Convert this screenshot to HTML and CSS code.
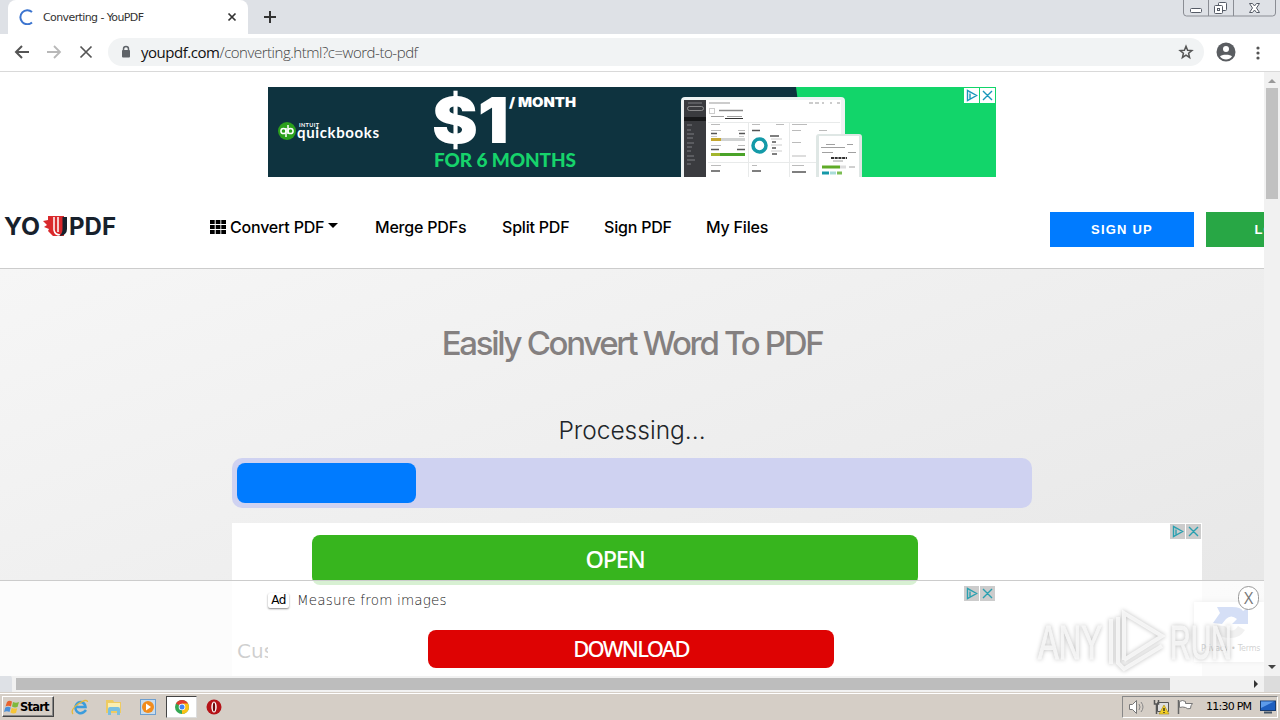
FILE: index.html
```
<!DOCTYPE html>
<html lang="en">
<head>
	<meta charset="UTF-8">
	<title>Converting - YouPDF</title>
	<link rel="stylesheet" href="styles.css">
</head>
<body>
	<!-- shared AdChoices mark -->
	<svg class="defs" width="0" height="0">
		<symbol id="adchoices" viewBox="0 0 32 15">
			<rect class="ac-bg" width="15" height="15"/><rect class="ac-bg" x="16" width="15" height="15"/>
			<path d="M3.5 2.5v10l9-5zM6 5.500v5M6 3.800v1M19 3l9 9M28 3l-9 9" fill="none" stroke="currentColor" stroke-width="1.400"/>
		</symbol>
	</svg>

	<header class="tabstrip">
		<div class="tab">
			<svg width="16" height="16" viewBox="0 0 16 16"><path d="M13 3A7 7 0 1 0 13 13.500" fill="none" stroke="#3b74cf" stroke-width="2"/></svg>
			<span class="tab-title">Converting - YouPDF</span>
			<svg width="10" height="10" viewBox="0 0 10 10"><path d="M1.500 1.500l7 7M8.500 1.500l-7 7" stroke="#333" stroke-width="1.700"/></svg>
		</div>
		<svg class="newtab" width="14" height="14" viewBox="0 0 14 14"><path d="M7 1v12M1 7h12" stroke="#333" stroke-width="2"/></svg>
		<svg class="winbtns" width="94" height="17" viewBox="0 0 94 17">
			<path d="M.5 0v13q0 3 3 3h86q3 0 3-3V0M25.500 0v16M50.500 0v16" fill="none" stroke="#8a8d94"/>
			<g fill="#fff" stroke="#555b66">
				<rect x="7.500" y="8.500" width="11" height="4" rx="1"/>
				<rect x="35.500" y="2.500" width="8" height="8" rx="1"/><rect x="31.500" y="5.500" width="8" height="8" rx="1"/><rect x="34.500" y="8.500" width="2" height="2"/>
				<path d="M66.500 3.500h3l2 2.500 2-2.500h3l-3 4.500 3 4.500h-3l-2-2.500-2 2.500h-3l3-4.500z"/>
			</g>
		</svg>
	</header>

	<div class="toolbar">
		<svg class="tool" width="16" height="16" viewBox="0 0 16 16"><path d="M15 8H2M8 2L2 8l6 6" fill="none" stroke="#555" stroke-width="2"/></svg>
		<svg class="tool" width="16" height="16" viewBox="0 0 16 16"><path d="M1 8h13M8 2l6 6-6 6" fill="none" stroke="#b8b8b8" stroke-width="1.800"/></svg>
		<svg class="tool" width="16" height="16" viewBox="0 0 16 16"><path d="M2.500 2.500l11 11M13.500 2.500l-11 11" stroke="#555" stroke-width="1.700"/></svg>
		<div class="omnibox">
			<svg width="10" height="14" viewBox="0 0 10 14"><path d="M2.500 6V4a2.500 2.500 0 0 1 5 0v2" fill="none" stroke="#5f6368" stroke-width="1.500"/><rect x="1" y="5" width="8" height="7.500" rx="1" fill="#5f6368"/></svg>
			<span class="url"><b>youpdf.com</b>/converting.html?c=word-to-pdf</span>
			<svg width="16" height="16" viewBox="0 0 16 16"><path d="M8 2.200l1.600 4 4.300.3-3.300 2.800 1 4.200L8 11.200l-3.600 2.300 1-4.200-3.300-2.800 4.300-.3z" fill="none" stroke="#555" stroke-width="1.500"/></svg>
		</div>
		<svg class="avatar" width="20" height="20" viewBox="0 0 20 20"><circle cx="10" cy="10" r="9.500" fill="#5a5d61"/><circle cx="10" cy="7" r="3" fill="#fff"/><path d="M4 14.500c1-2.500 11-2.500 12 0a7.500 7.500 0 0 1-12 0" fill="#fff"/></svg>
		<svg width="4" height="16" viewBox="0 0 4 16" fill="#555"><circle cx="2" cy="3" r="1.600"/><circle cx="2" cy="8" r="1.600"/><circle cx="2" cy="13" r="1.600"/></svg>
	</div>

	<div class="viewport">
		<main class="page">
			<svg class="banner" width="728" height="90" viewBox="0 0 728 90">
				<rect width="728" height="90" fill="#0e333f"/>
				<path d="M528 0h200v90H540z" fill="#12d56a"/>
				<circle cx="19" cy="44" r="9" fill="#2ca01c"/>
				<g fill="none" stroke="#fff" stroke-width="1.500"><circle cx="15.500" cy="44" r="2.600"/><path d="M18 41v9"/><circle cx="22.500" cy="44" r="2.600"/><path d="M20 38v9"/></g>
				<text class="qb" x="31" y="40" font-size="5.500" textLength="20">INTUIT</text>
				<text class="qb" x="29" y="51" font-size="15" textLength="82">quickbooks</text>
				<text class="price" x="164" y="56" font-size="63" textLength="77" lengthAdjust="spacingAndGlyphs">$1</text>
				<text class="price" x="241" y="20" font-size="13.500" textLength="67" lengthAdjust="spacingAndGlyphs">/ MONTH</text>
				<text class="months" x="166" y="80" font-size="19" textLength="142">FOR 6 MONTHS</text>
				<!-- laptop -->
				<path d="M413 90V14q0-4 4-4h156q4 0 4 4v76z" fill="#eef3f3"/>
				<rect x="416" y="13" width="157" height="77" fill="#fff"/>
				<rect x="416" y="13" width="22" height="77" fill="#3a3b3f"/>
				<rect x="416" y="30" width="22" height="4" fill="#17181a"/>
				<rect x="419.500" y="19.500" width="16" height="4" rx="2" fill="none" stroke="#aaa" stroke-width=".7"/>
				<path d="M420 16h14M419 38h5M419 43h4M419 47h7M419 51h6M419 56h7M419 60h5M419 64h4M419 69h7M419 73h8M419 77h4" stroke="#7d7f83"/>
				<path d="M441 16h21M541 16h4M547 16h4M554 16h2M562 16h2M569 16h3" stroke="#999"/>
				<path d="M451 23.500h24" stroke="#888" stroke-width="1.500"/><rect x="441.500" y="21.500" width="5" height="5" fill="none" stroke="#ccc"/>
				<path d="M443 29.500h13M459 29.500h15" stroke="#777" stroke-width=".7"/><path d="M457 31.500h18" stroke="#333"/>
				<path d="M440 35.500h132M440 75.500h132M480.500 36v54M521.500 36v54" stroke="#e8eaea"/>
				<path d="M443 37.500h9M484 37.500h8M524 37.500h15M443 43.500h10M470 43.500h7M524 43.500h9M551 43.500h8M524 55.500h9M551 55.500h8M443 58.500h10M470 58.500h7M524 69h14M443 78.500h10M484 78.500h5M524 78.500h12M508 37.500h8" stroke="#aaa" stroke-width=".8"/>
				<path d="M443 46.500h6M471 46.500h6M484 43.500h8M502 49h9M504 55h4M504 61h4M504 67h5M443 62.500h8M469 62.500h8M443 84h9M484 84h9M524 85h14" stroke="#555" stroke-width="1.500"/>
				<path d="M443 49.500h6M471 49.500h5M503 52h11M503 58h11M503 64h11" stroke="#ccc"/>
				<path d="M443 52.500h34" stroke="#d0d2d2" stroke-width="3"/><path d="M443 52.500h10" stroke="#c5a72f" stroke-width="3"/>
				<path d="M443 67.500h34" stroke="#4aa329" stroke-width="3"/><path d="M443 67.500h9" stroke="#a2b52c" stroke-width="3"/>
				<circle cx="491.500" cy="58.500" r="6.500" fill="none" stroke="#149aa8" stroke-width="3.500"/>
				<!-- phone -->
				<path d="M548 90V50q0-3 3-3h40q3 0 3 3v40z" fill="#dfe7e5"/>
				<rect x="551" y="49" width="40" height="41" fill="#fff"/>
				<path d="M558 57.500h9M579 57.500h6M554 65.500h11M580 65.500h8M565 74h10M581 80h6" stroke="#888" stroke-width=".8"/><path d="M553 60.500h24" stroke="#888" stroke-width=".8"/>
				<path d="M563 71h16" stroke="#333" stroke-width="2" stroke-dasharray="3 .7"/>
				<path d="M554 80h18" stroke="#5fab27" stroke-width="3"/><path d="M572 80h6" stroke="#ddd" stroke-width="3"/>
				<path d="M554 86h7" stroke="#1599a8" stroke-width="3"/><path d="M562 86h6" stroke="#a9dcd8" stroke-width="3"/><path d="M569 86h5" stroke="#7bbd53" stroke-width="3"/>
				<use class="ac-white" href="#adchoices" x="696" y="1" width="32" height="15"/>
			</svg>

			<nav class="nav">
				<svg class="logo" width="113" height="32" viewBox="0 0 113 32">
					<text x="0" y="25" textLength="36" lengthAdjust="spacingAndGlyphs">YO</text>
					<path d="M44 6h16v20H49l-5-5 1-2-5-2 3-2-4-4 5-1z" fill="#d9292c"/>
					<path d="M50 7v13q1 5 6 5M54 7v15" fill="none" stroke="#fff" stroke-width="1.500"/>
					<path d="M58.500 7H63v12q0 6.500-8 7 3.500-2 3.500-7z" fill="#17212c"/>
					<text x="65" y="25" textLength="47" lengthAdjust="spacingAndGlyphs">PDF</text>
				</svg>
				<div class="links">
					<a class="convert"><svg width="16" height="14" viewBox="0 0 16 14"><path d="M0 0h4.700v4H0zM5.700 0h4.700v4H5.700zM11.300 0H16v4h-4.700zM0 5h4.700v4H0zM5.700 5h4.700v4H5.700zM11.300 5H16v4h-4.700zM0 10h4.700v4H0zM5.700 10h4.700v4H5.700zM11.300 10H16v4h-4.700z"/></svg>Convert PDF<i class="caret"></i></a>
					<a class="merge">Merge PDFs</a>
					<a class="split">Split PDF</a>
					<a class="sign">Sign PDF</a>
					<a class="files">My Files</a>
				</div>
				<a class="btn signup">SIGN UP</a>
				<a class="btn login">LOGIN</a>
			</nav>

			<section class="hero">
				<h1>Easily Convert Word To PDF</h1>
				<p class="status">Processing...</p>
				<div class="progress"><div class="progress-fill"></div></div>
				<div class="adbox">
					<a class="open">OPEN</a>
					<svg class="choices" width="32" height="15"><use href="#adchoices" width="32" height="15"/></svg>
					<p class="custom">Cus</p>
				</div>
			</section>

			<div class="recaptcha">
				<svg width="40" height="34" viewBox="0 0 40 34">
					<path d="M2 17L9 7 6 1h15q9 0 11 4l5-3v16H21l5-5q-6-5-11 0l-4 5z" fill="#2f62d0"/>
					<path d="M3 19q3 14 17 13 9 0 14-8l-7-4q-6 9-13 0z" fill="#bbb"/>
				</svg>
				<span>Privacy &bull; Terms</span>
			</div>
			<aside class="sticky">
				<div class="sticky-ad">
					<div class="sticky-head">
						<span class="badge">Ad</span><span class="measure">Measure from images</span>
						<svg class="choices" width="32" height="15"><use href="#adchoices" width="32" height="15"/></svg>
					</div>
					<a class="download">DOWNLOAD</a>
				</div>
				<span class="close">X</span>
			</aside>
		</main>
		<div class="vscroll"><i class="up"></i><div class="vthumb"></div><i class="down"></i></div>
	</div>
	<div class="hscroll"><i class="statusbit"></i><div class="hthumb"></div><i class="right"></i><i class="corner"></i></div>

	<footer class="taskbar">
		<div class="start">
			<svg width="16" height="16" viewBox="0 0 16 16"><path d="M3 3q2-2 5-.5L7 7.500Q4 6 1.500 7.500z" fill="#e8622c"/><path d="M9 3q3 1.500 6 0l-1.500 5q-3 1-5.500-.5z" fill="#7fb93c"/><path d="M1.300 8.500Q4 7 6.700 8.500L5.500 13Q3 11.500 0 13z" fill="#4a8fd8"/><path d="M7.700 8.700q2.500 1.500 5.500.5L12 14q-3 1-5.500-.5z" fill="#f6c536"/></svg>
			<b>Start</b>
		</div>
		<svg class="task" width="18" height="18" viewBox="0 0 18 18"><path d="M15 12q-3 4-7 3-4-2-3.500-6.500Q6 4 10 4q4 1 4.500 5H5" fill="none" stroke="#3b9cdc" stroke-width="2.500"/><path d="M2 16Q-1 12 7 6q9-6 9.500-2" fill="none" stroke="#e6b93a" stroke-width="1.300"/></svg>
		<svg class="task" width="18" height="18" viewBox="0 0 18 18"><path d="M1 2h7l1 2h7v11H1z" fill="#eecb62"/><path d="M3 5h12v6H3z" fill="#fbeeb0"/><path d="M3 17v-6q0-2 2-2h8q2 0 2 2v6h-3v-4H6v4z" fill="#79bfe0"/></svg>
		<svg class="task" width="18" height="18" viewBox="0 0 18 18"><rect x="1.500" y="1.500" width="15" height="15" fill="#c9dcec" stroke="#6d9fd0"/><circle cx="9" cy="9" r="6" fill="#f28c1c"/><path d="M7 5.500v7l5-3.500z" fill="#fff"/></svg>
		<div class="active-task"><svg width="14" height="14" viewBox="0 0 14 14"><circle cx="7" cy="7" r="7" fill="#34a853"/><path d="M7 7L1 3.500A7 7 0 0 1 13 3.500z" fill="#e33b2e"/><path d="M7 7V3.500h6A7 7 0 0 1 7 14z" fill="#fbc116"/><circle cx="7" cy="7" r="3.300" fill="#fff"/><circle cx="7" cy="7" r="2.500" fill="#4285f4"/></svg></div>
		<svg class="opera" width="16" height="16" viewBox="0 0 16 16"><circle cx="8" cy="8" r="7.500" fill="#b51318"/><ellipse cx="8" cy="8" rx="2.700" ry="5.500" fill="#fff"/><ellipse cx="8" cy="8" rx="1.200" ry="4.500" fill="#70090c"/></svg>
		<div class="tray">
			<svg width="18" height="16" viewBox="0 0 18 16"><path d="M1.500 5.500h3l4-4v13l-4-4h-3z" fill="#fff" stroke="#777"/><path d="M11 5q2 3 0 6M13 3q4 5 0 10" fill="none" stroke="#888"/></svg>
			<svg width="17" height="16" viewBox="0 0 17 16"><path d="M4.500 3.500h11v9h-11z" fill="#ddd" stroke="#555"/><path d="M1.500 1v4h4V1M3.500 5v10" fill="none" stroke="#555" stroke-width="1.500"/><path d="M11 6l5 9H6z" fill="#f3cf24" stroke="#a78a10" stroke-width=".6"/><path d="M11 9v3M11 13v1" stroke="#222" stroke-width="1.300"/></svg>
			<svg width="17" height="16" viewBox="0 0 17 16"><path d="M1.500 1v14" stroke="#666" stroke-width="1.500"/><path d="M2.500 2.500q3-2 6 0v2h7q-2 2-2 5-3 1-5-1-3-1-6 0z" fill="#fff" stroke="#777"/></svg>
			<span class="clock">11:30 PM</span>
			<svg width="16" height="14" viewBox="0 0 16 14"><rect x=".5" y="1" width="15" height="9.500" fill="#1e5fc0" stroke="#173b70"/><path d="M1 1.500h13L1 8z" fill="#5d9bea"/><path d="M4 12.500h8" stroke="#456" stroke-width="2"/></svg>
		</div>
	</footer>

	<svg class="watermark" width="200" height="70" viewBox="0 0 200 70">
		<g class="wm-text">
			<text x="4" y="53" textLength="64" lengthAdjust="spacingAndGlyphs">ANY</text>
			<text x="136" y="53" textLength="62" lengthAdjust="spacingAndGlyphs">RUN</text>
		</g>
		<g class="wm-mark"><path d="M90 54V7l38 23-38 24"/><path d="M77 13v45M84 11v46l6 6 38-23"/></g>
	</svg>
</body>
</html>
```
FILE: styles.css
```
* { box-sizing: border-box; }
body {
	margin: 0;
	width: 1280px;
	height: 720px;
	overflow: hidden;
	position: relative;
	display: flex;
	flex-direction: column;
	background: #fff;
	font-family: "DejaVu Sans", sans-serif;
}
svg { display: block; flex: none; }
h1, p { margin: 0; }
.defs { position: absolute; }

/* browser chrome */
.tabstrip {
	height: 34px;
	flex: none;
	display: flex;
	align-items: flex-start;
	background: #dee1e6;
}
.tab {
	width: 240px;
	height: 34px;
	margin-left: 8px;
	padding: 0 11px;
	display: flex;
	align-items: center;
	background: #fff;
	border-radius: 8px 8px 0 0;
}
.tab-title {
	flex: 1;
	margin-left: 8px;
	font-size: 11px;
	letter-spacing: -0.6px;
	color: #333;
	white-space: nowrap;
}
.newtab { margin: 10px 0 0 15px; }
.winbtns { margin-left: auto; margin-right: 3px; }
.toolbar {
	height: 38px;
	flex: none;
	display: flex;
	align-items: center;
	padding-left: 14px;
	border-bottom: 1px solid #d9d9d9;
}
.tool { margin-right: 16px; position: relative; top: -1px; }
.omnibox {
	width: 1096px;
	height: 28px;
	margin: -2px 0 0 -2px;
	padding: 0 10px 0 13px;
	display: flex;
	align-items: center;
	background: #f1f3f4;
	border-radius: 14px;
}
.url {
	flex: 1;
	margin-left: 10px;
	font: 300 15px "Open Sans", sans-serif;
	letter-spacing: -0.47px;
	color: #444;
}
.url b { font-weight: 400; color: #111; }
.avatar { margin: -2px 20px 0 12px; }

.viewport { height: 604px; flex: none; display: flex; }
.page {
	width: 1264px;
	height: 604px;
	position: relative;
	overflow: hidden;
	display: flex;
	flex-direction: column;
}
.banner { margin: 15px 0 0 268px; }
.qb { font-family: Lato, sans-serif; font-weight: 700; fill: #fff; }
.price { font-family: Inter, sans-serif; font-weight: 900; fill: #fff; }
.months { font-family: Lato, sans-serif; font-weight: 900; fill: #16d36b; }
.choices { color: #2aa0b0; }
.ac-white { color: #1a97bb; --ac: #fff; }
.ac-bg { fill: var(--ac, #ccc); }

.nav {
	height: 92px;
	flex: none;
	display: flex;
	align-items: center;
	padding: 13px 0 0 4px;
	border-bottom: 1px solid #ccc;
}
.logo {
	font: 900 24px Inter, sans-serif;
	font-weight: 700;
	fill: #17212c;
	margin-top: -6px;
}
.links {
	width: 840px;
	flex: none;
	margin-left: 93px;
	display: flex;
	font: 500 16px/24px Inter, sans-serif;
	letter-spacing: -0.2px;
	white-space: nowrap;
	margin-top: -4px;
}
.convert { width: 165px; display: flex; align-items: center; gap: 4px; }
.caret { margin-top: -3px; border: 5px solid transparent; border-top-color: #000; border-bottom: 0; }
.merge { width: 127px; }
.split, .sign { width: 102px; }
.btn {
	width: 144px;
	height: 35px;
	flex: none;
	font: 700 13px/35px "Liberation Sans", sans-serif;
	letter-spacing: 1.200px;
	text-align: center;
	color: #fff;
}
.signup { background: #007bff; }
.login { margin-left: 12px; background: #28a745; }

.hero {
	height: 407px;
	flex: none;
	background: linear-gradient(160deg, #f6f6f6, #e6e6e6);
	text-align: center;
}
h1 {
	padding-top: 49px;
	font: 500 33px/50px Inter, sans-serif;
	letter-spacing: -2.300px;
	color: #848080;
}
.status {
	margin-top: 43px;
	font: 300 24.500px/38px Inter, sans-serif;
	color: #212529;
}
.progress {
	width: 800px;
	height: 50px;
	margin: 9px 0 15px 232px;
	padding: 5px;
	border-radius: 10px;
	background: #cfd2f1;
}
.progress-fill { width: 179px; height: 40px; border-radius: 8px; background: #007bff; }
.adbox {
	width: 970px;
	height: 160px;
	margin-left: 232px;
	display: grid;
	grid-template-columns: 80px 606px 252px 32px;
	grid-template-rows: 62px 98px;
	background: #fff;
}
.open, .download {
	display: block;
	color: #fff;
	text-align: center;
	border-radius: 8px;
}
.open {
	grid-column: 2;
	height: 50px;
	margin-top: 12px;
	background: #37b51e;
	font: 500 23.500px/49px "Noto Sans", sans-serif;
	letter-spacing: -1.300px;
}
.adbox .choices { grid-column: 4; margin-top: 1px; }
.custom {
	grid-column: 1;
	margin: 52px 0 0 5px;
	text-align: left;
	font-size: 20px;
	line-height: 28px;
	color: #111;
}
.recaptcha {
	position: absolute;
	left: 1194px;
	top: 530px;
	width: 70px;
	height: 60px;
	padding: 4px 0 0 7px;
	background: #fff;
	box-shadow: 0 0 5px #999;
	font-size: 8px;
	letter-spacing: -0.2px;
	color: #111;
	white-space: nowrap;
}
.recaptcha svg { margin: 0 0 4px 10px; }

/* ad pinned over the bottom of the page */
.sticky {
	position: absolute;
	left: 0;
	top: 508px;
	width: 1264px;
	height: 96px;
	padding: 4px 0 0 268px;
	display: flex;
	background: rgba(255, 255, 255, .8);
	border-top: 1px solid #ccc;
}
.sticky-ad { width: 728px; height: 90px; background: #fff; }
.sticky-head { display: flex; height: 30px; align-items: center; }
.sticky-head .choices { margin: -13px 0 0 auto; }
.badge {
	width: 21px;
	height: 15px;
	font-size: 12px;
	line-height: 14px;
	text-align: center;
	letter-spacing: -0.5px;
	border-radius: 2px;
	box-shadow: 0 1px 2px #888;
}
.measure { margin-left: 8px; font-size: 13.500px; letter-spacing: .2px; color: #222; font-weight: 200; }
.download {
	width: 406px;
	height: 38px;
	margin: 15px 0 0 160px;
	background: #de0303;
	font: 500 22px/37px "Noto Sans", sans-serif;
	letter-spacing: -1.750px;
}
.close {
	width: 21px;
	height: 24px;
	margin: 1px 0 0 242px;
	border: 1px solid #999;
	border-radius: 11px;
	background: #fff;
	font: 16px/23px "Open Sans", sans-serif;
	text-align: center;
	color: #777;
}

.vscroll { width: 16px; background: #f1f1f1; display: flex; flex-direction: column; align-items: center; }
.up { margin-top: 7px; border: 4px solid transparent; border-bottom-color: #999; border-top: 0; }
.vthumb { width: 12px; height: 111px; margin-top: 5px; background: #c1c1c1; }
.down { margin: auto 0 7px; border: 4px solid transparent; border-top-color: #444; border-bottom: 0; }
.hscroll { height: 16px; flex: none; display: flex; align-items: center; background: #f1f1f1; }
.statusbit { width: 12px; height: 18px; margin: -2px 4px 0 0; background: #dee1e6; border-radius: 0 5px 0 0; }
.hthumb { width: 1154px; height: 12px; background: #bdbdbd; }
.right { margin-left: 84px; border: 4px solid transparent; border-left-color: #333; border-right: 0; }
.corner { width: 16px; height: 16px; margin-left: auto; background: #dcdcdc; }

.taskbar {
	height: 28px;
	display: flex;
	align-items: center;
	padding: 0 2px;
	background: #d5cec6;
	border-top: 1px solid #d5cec6;
	box-shadow: inset 0 1px #fff;
}
.start {
	width: 52px;
	height: 21px;
	padding-left: 1px;
	display: flex;
	align-items: center;
	border: 1px solid #fff;
	border-right-color: #444;
	border-bottom-color: #444;
	box-shadow: inset -1px -1px #888;
	font-size: 11.500px;
	letter-spacing: -0.8px;
}
.task { margin-left: 16px; }
.start + .task { margin-left: 17px; }
.active-task {
	width: 31px;
	height: 22px;
	margin-left: 9px;
	padding: 3px 0 0 8px;
	background: #fff;
	border: 1px solid #ddd;
	border-top-color: #444;
	border-left-color: #444;
}
.opera { margin-left: 9px; }
.tray {
	width: 156px;
	height: 22px;
	margin-left: auto;
	padding: 0 1px 0 5px;
	display: flex;
	align-items: center;
	gap: 7px;
	border: 1px solid #fff;
	border-left-color: #888;
	border-top-color: #888;
}
.clock { font-size: 11px; letter-spacing: -0.750px; margin-left: 5px; flex: 1; white-space: nowrap; }

.watermark { position: absolute; left: 1034px; top: 606px; filter: drop-shadow(0 0 2px rgba(0, 0, 0, .3)); }
.wm-text { font: 400 49px "Liberation Sans", sans-serif; fill: #fafafa; stroke: #fafafa; stroke-width: 1; opacity: .85; }
.wm-mark { fill: none; stroke: #fafafa; stroke-width: 4; opacity: .85; }
```
